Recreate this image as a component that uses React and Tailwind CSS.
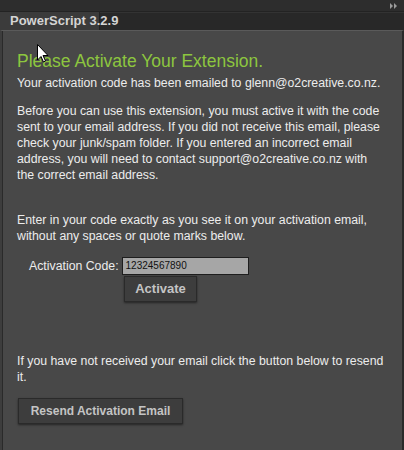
export default function App() {
  return (
    <div className="relative w-[404px] h-[450px] bg-[#2f2f2f] flex flex-col overflow-hidden" style={{ fontFamily: '"Liberation Sans", Arial, sans-serif' }}>
      {/* top bar */}
      <div className="h-[12px] bg-[#2d2d2d] border-b border-[#232323] flex justify-end items-center pr-[6px]">
        <svg width="8" height="6" viewBox="0 0 8 6">
          <path d="M0 0 L3 3 L0 6 Z" fill="#9a9a9a" />
          <path d="M4 0 L7 3 L4 6 Z" fill="#9a9a9a" />
        </svg>
      </div>
      {/* tab row */}
      <div className="h-[18px] flex bg-[#282828]">
        <div className="w-[100px] h-full bg-[#3b3b3b] border-r border-[#222] text-[13px] font-bold leading-[18px] text-[#d4d4d4] pl-[10px] whitespace-nowrap">
          PowerScript 3.2.9
        </div>
        <div className="flex-1 border-t border-[#333]"></div>
      </div>
      {/* content */}
      <div className="flex-1 bg-[#484848] border-t border-[#5a5a5a] border-l-[2px] border-l-[#3d3d3d] border-r-[2px] border-r-[#2a2a2a]">
        <div className="h-full border-l border-[#2a2a2a] pl-[14px] pt-[18px] text-[12.3px] leading-[16px] text-[#ececec] whitespace-nowrap">
          <h1 className="text-[17.5px] leading-[24px] text-[#8dc63f] mb-[2px]">Please Activate Your Extension.</h1>
          <p>Your activation code has been emailed to glenn@o2creative.co.nz.</p>
          <p className="mt-[12px]">
            Before you can use this extension, you must active it with the code<br />
            sent to your email address. If you did not receive this email, please<br />
            check your junk/spam folder. If you entered an incorrect email<br />
            address, you will need to contact support@o2creative.co.nz with<br />
            the correct email address.
          </p>
          <p className="mt-[29px]">
            Enter in your code exactly as you see it on your activation email,<br />
            without any spaces or quote marks below.
          </p>
          <div className="mt-[13px] flex items-center pl-[12px]">
            <span>Activation Code:</span>
            <div className="ml-[3px] w-[127px] h-[18px] bg-[#a6a6a6] border border-[#1e1e1e] text-[10px] leading-[16px] text-[#111] pl-[3px]">12324567890</div>
          </div>
          <div className="pl-[107px] mt-[1px]">
            <button className="w-[73px] h-[26px] bg-[#3d3d3d] border border-[#2a2a2a] shadow-[0_1px_2px_rgba(0,0,0,0.5)] text-[13px] font-bold text-[#c4c4c4]">Activate</button>
          </div>
          <p className="mt-[51px]">If you have not received your email click the button below to resend<br />it.</p>
          <button className="mt-[13px] ml-[1px] w-[165px] h-[26px] bg-[#3d3d3d] border border-[#2a2a2a] shadow-[0_1px_2px_rgba(0,0,0,0.5)] text-[12px] font-bold text-[#c4c4c4]">Resend Activation Email</button>
        </div>
      </div>
      {/* cursor */}
      <svg className="absolute left-[37px] top-[44px]" width="12" height="19" viewBox="0 0 12 19">
        <path d="M0.5 0.5 L0.5 16 L4 12.5 L6.5 18 L8.5 17 L6 11.5 L11 11.5 Z" fill="#fff" stroke="#000" strokeWidth="1" />
      </svg>
    </div>
  );
}
